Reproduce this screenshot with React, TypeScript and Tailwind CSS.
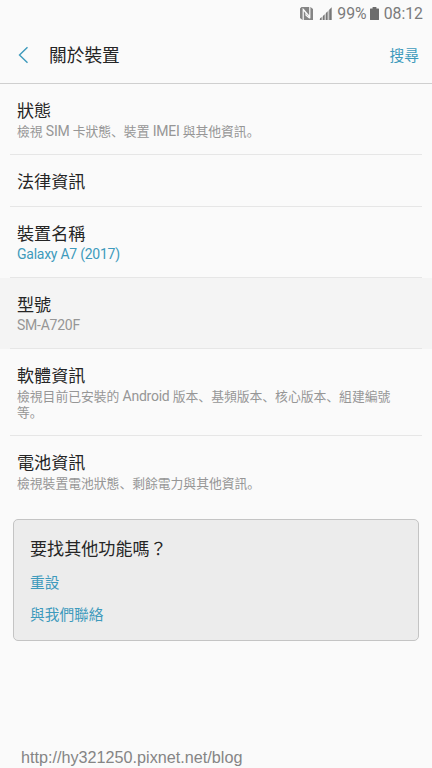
import React from 'react';

interface InfoItem {
  id: string;
  title: string;
  summary?: string;
  accent?: boolean;
  pressed?: boolean;
  height: string;
}

const items: InfoItem[] = [
  { id: 'status', title: '狀態', summary: '檢視 SIM 卡狀態、裝置 IMEI 與其他資訊。', height: 'h-[71px]' },
  { id: 'legal', title: '法律資訊', height: 'h-[52px]' },
  { id: 'name', title: '裝置名稱', summary: 'Galaxy A7 (2017)', accent: true, height: 'h-[71px]' },
  { id: 'model', title: '型號', summary: 'SM-A720F', pressed: true, height: 'h-[71px]' },
  {
    id: 'software',
    title: '軟體資訊',
    summary: '檢視目前已安裝的 Android 版本、基頻版本、核心版本、組建編號等。',
    height: 'h-[87px]',
  },
  { id: 'battery', title: '電池資訊', summary: '檢視裝置電池狀態、剩餘電力與其他資訊。', height: 'h-[83px]' },
];

// Latin runs are set slightly larger than the Chinese text around them
function MixedText({ text }: { text: string }) {
  return (
    <>
      {text.split(/([\x20-\x7e]+)/).map((part, index) =>
        index % 2 === 1 ? (
          <span key={index} className="text-[14px] leading-none tracking-[-0.25px]">{part}</span>
        ) : (
          part
        )
      )}
    </>
  );
}

function StatusBar() {
  return (
    <div className="flex h-[27px] items-center justify-end pr-[9px] text-[15.8px] leading-[27px] text-[#7b7b7b]">
      <svg width="13" height="13" viewBox="0 0 13 13" className="mr-[6px]">
        <path d="M1.500 0h9L13 2v11H2.500L0 11V1.500z" fill="#858585" />
        <path d="M3.200 13V2.500L6 5.800v2.400l3.800 3M3.200 2.200 9.800 9.800V0" fill="none" stroke="#fafafa" strokeWidth="1.200" />
      </svg>
      <svg width="13" height="13" viewBox="0 0 13 13" className="mr-[5px]">
        <path d="M0 13 13 0v13z" fill="#c9c9c9" />
        <path d="M1 13v-1.5L2.5 10v3zM4 13V9l1.5-1.5V13zM7 13V6l1.5-1.5V13zM10.3 13V2.7L12.5.5V13z" fill="#777" />
      </svg>
      <span>99%</span>
      <svg width="9" height="13" viewBox="0 0 9 13" className="ml-[3px] mr-[5px]">
        <path d="M2.6 0h3.8v1.6H8.5a.5.5 0 0 1 .5.5v10.4a.5.5 0 0 1-.5.5h-8a.5.5 0 0 1-.5-.5V2.100a.5.5 0 0 1 .5-.5h2.100z" fill="#6c6c6c" />
      </svg>
      <span>08:12</span>
    </div>
  );
}

function InfoRow({ item, last }: { item: InfoItem; last: boolean }) {
  return (
    <li className={`flex flex-col ${item.height} ${item.pressed ? 'bg-[#f4f4f4]' : ''}`}>
      <div className="flex-1 pl-[17px] pr-[36px] pt-[17px]">
        <h2 className="text-[17.1px] leading-[21px] text-[#252525]">{item.title}</h2>
        {item.summary && (
          <p
            className={`mt-[2px] text-[12.8px] leading-[15.5px] ${
              item.accent ? 'text-[#3e9abc]' : 'text-[#969696]'
            }`}
          >
            <MixedText text={item.summary} />
          </p>
        )}
      </div>
      {!last && <div className="mx-[10px] h-px bg-[#e6e6e6]" />}
    </li>
  );
}

function App() {
  return (
    <div className="flex h-screen w-full flex-col overflow-hidden bg-[#fafafa] font-[Roboto,'Noto_Sans_CJK_SC',sans-serif]">
      <StatusBar />

      {/* Header */}
      <header className="flex h-[57px] items-center border-b border-[#cfcfcf] pl-[18px] pr-[13px]">
        <svg width="11" height="18" viewBox="0 0 11 18" className="shrink-0">
          <path d="M9.500 1.200 1.500 9l8 7.800" fill="none" stroke="#3e9abc" strokeWidth="1.400" />
        </svg>
        <h1 className="ml-5 flex-1 pt-[3px] text-[17.7px] text-[#252525]">關於裝置</h1>
        <button className="pt-[3px] text-[14.7px] text-[#3e9abc]">搜尋</button>
      </header>

      {/* Device info */}
      <ul>
        {items.map((item, index) => (
          <InfoRow key={item.id} item={item} last={index === items.length - 1} />
        ))}
      </ul>

      {/* Related features */}
      <section className="mx-[13px] h-[122px] shrink-0 rounded-[5px] border border-[#c4c4c4] bg-[#ececec] px-4 pt-[18px]">
        <h2 className="font-[Roboto,'Noto_Sans_CJK_TC',sans-serif] text-[17.1px] leading-[22px] text-[#252525]">
          要找其他功能嗎？
        </h2>
        <a className="mt-[13px] block text-[14.7px] leading-5 text-[#3e9abc]">重設</a>
        <a className="mt-3 block text-[14.7px] leading-5 text-[#3e9abc]">與我們聯絡</a>
      </section>

      <footer className="mt-auto pl-[21px] font-['Liberation_Sans',sans-serif] text-[16.2px] leading-[22px] text-[#858585]">
        http://hy321250.pixnet.net/blog
      </footer>
    </div>
  );
}

export default App;
